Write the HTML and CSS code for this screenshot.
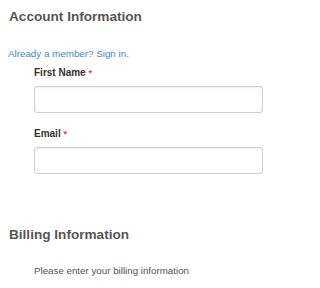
FILE: index.html
```html
<!DOCTYPE html>
<html>
<head>
<meta charset="utf-8">
<link rel="stylesheet" href="styles.css">
</head>
<body>
  <section class="section account">
    <h2 class="section-title">Account Information</h2>
    <a class="signin" href="#">Already a member? Sign in.</a>
    <div class="fields">
      <div class="field">
        <label class="label">First Name <span class="req">*</span></label>
        <input class="input" type="text">
      </div>
      <div class="field">
        <label class="label">Email <span class="req">*</span></label>
        <input class="input" type="text">
      </div>
    </div>
  </section>
  <section class="section billing">
    <h2 class="section-title">Billing Information</h2>
    <p class="note">Please enter your billing information</p>
  </section>
</body>
</html>
```
FILE: styles.css
```css
html, body {
  margin: 0;
  padding: 0;
  background: #fff;
}
body {
  font-family: "Liberation Sans", Arial, sans-serif;
  padding: 9px 0 0 0;
}
.section-title {
  margin: 0 0 0 9px;
  font-size: 13.6px;
  line-height: 16px;
  font-weight: bold;
  color: #555;
}
.signin {
  display: block;
  margin: 23px 0 0 8px;
  font-size: 9.8px;
  line-height: 11px;
  color: #3c8dbc;
  text-decoration: none;
}
.fields {
  display: flex;
  flex-direction: column;
  gap: 15.5px;
  padding-left: 34px;
  width: 229px;
  margin-top: 7.6px;
}
.field {
  display: flex;
  flex-direction: column;
  gap: 7px;
}
.label {
  font-size: 10px;
  line-height: 12px;
  font-weight: bold;
  color: #333;
}
.req {
  color: #e0454a;
  font-size: 9px;
}
.input {
  box-sizing: border-box;
  width: 229px;
  height: 27px;
  margin: 0;
  border: 1px solid #cfcfcf;
  border-radius: 3px;
  box-shadow: inset 0 1px 2px rgba(0,0,0,0.08);
  background: #fff;
}
.billing {
  margin-top: 52.5px;
}
.note {
  margin: 22px 0 0 34px;
  font-size: 9.75px;
  line-height: 11px;
  color: #555;
}
```
